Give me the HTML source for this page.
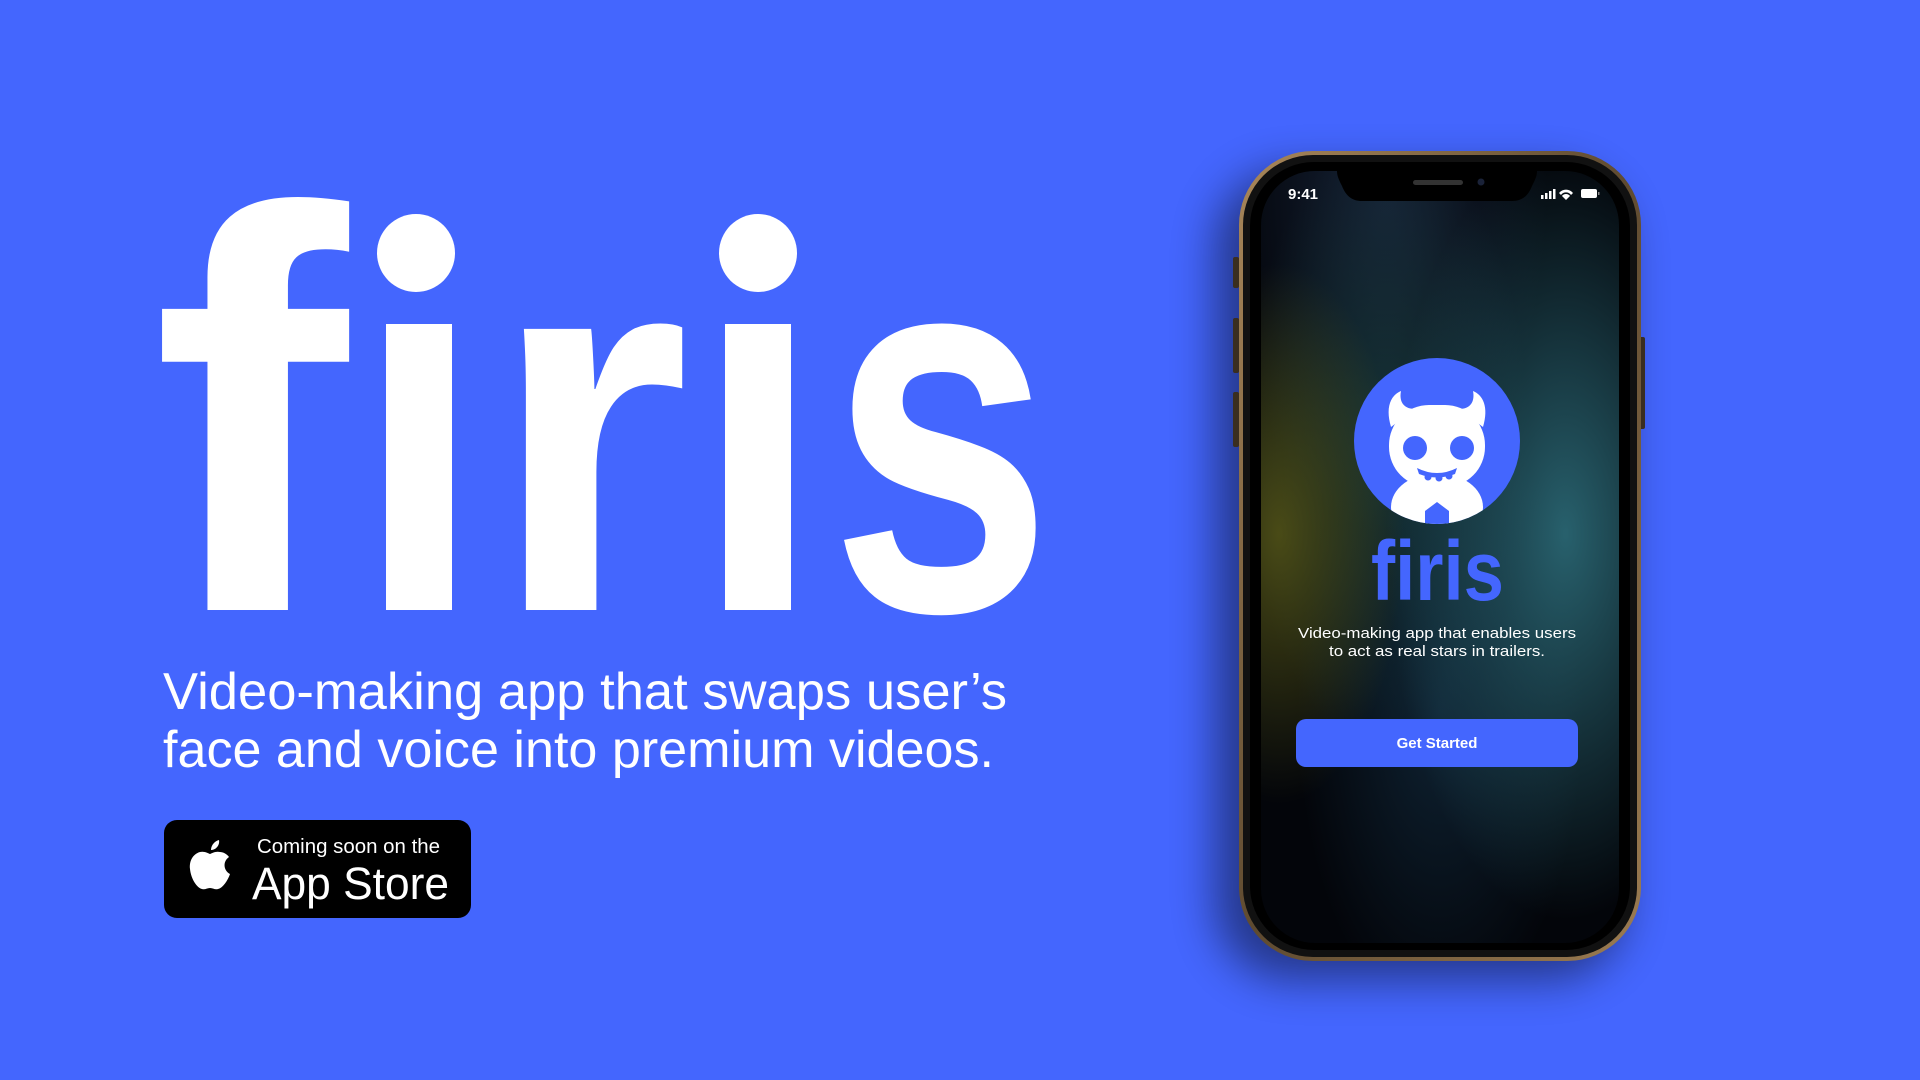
<!DOCTYPE html>
<html><head><meta charset="utf-8"><style>
html,body{margin:0;padding:0;width:1920px;height:1080px;overflow:hidden;background:#4466fe;font-family:"Liberation Sans",sans-serif}
svg{position:absolute;left:0;top:0}
</style></head><body>
<svg width="1920" height="1080" viewBox="0 0 1920 1080">
<defs>
<radialGradient id="g1" cx="0.85" cy="0.47" r="0.5"><stop offset="0" stop-color="#2c6b78" stop-opacity="0.9"/><stop offset="1" stop-color="#2c6b78" stop-opacity="0"/></radialGradient>
<radialGradient id="g2" cx="0.05" cy="0.47" r="0.35"><stop offset="0" stop-color="#5a5a18" stop-opacity="0.8"/><stop offset="1" stop-color="#5a5a18" stop-opacity="0"/></radialGradient>
<radialGradient id="g3" cx="0.35" cy="0.35" r="0.4"><stop offset="0" stop-color="#1d4a48" stop-opacity="0.6"/><stop offset="1" stop-color="#1d4a48" stop-opacity="0"/></radialGradient>
<radialGradient id="g4" cx="0.35" cy="0.02" r="0.45"><stop offset="0" stop-color="#1d2d48" stop-opacity="0.7"/><stop offset="1" stop-color="#1d2d48" stop-opacity="0"/></radialGradient>
<radialGradient id="g5" cx="0.5" cy="0.7" r="0.4"><stop offset="0" stop-color="#1a3f5a" stop-opacity="0.5"/><stop offset="1" stop-color="#1a3f5a" stop-opacity="0"/></radialGradient>
<linearGradient id="gold" x1="0" y1="0" x2="1" y2="1"><stop offset="0" stop-color="#a9875a"/><stop offset="0.5" stop-color="#5e4a30"/><stop offset="1" stop-color="#9c7c52"/></linearGradient>
<filter id="sh" x="-30%" y="-30%" width="160%" height="160%"><feGaussianBlur stdDeviation="22"/></filter>
<clipPath id="cc"><circle cx="0" cy="0" r="83"/></clipPath>
</defs>

<g fill="#fff" font-weight="bold" font-size="532">
<text x="152" y="610" font-size="570" textLength="196" lengthAdjust="spacingAndGlyphs">f</text>
<rect x="386" y="324" width="66" height="286"/>
<circle cx="416" cy="253" r="39"/>
<text x="490" y="610" textLength="200" lengthAdjust="spacingAndGlyphs">r</text>
<rect x="725" y="324" width="66" height="286"/>
<circle cx="758" cy="253" r="39"/>
<text x="830" y="610" textLength="222" lengthAdjust="spacingAndGlyphs">s</text>
</g>

<text x="163" y="709" font-size="52" fill="#fff" textLength="844" lengthAdjust="spacingAndGlyphs">Video-making app that swaps user’s</text>
<text x="163" y="767" font-size="52" fill="#fff" textLength="831" lengthAdjust="spacingAndGlyphs">face and voice into premium videos.</text>

<rect x="164" y="820" width="307" height="98" rx="13" fill="#000"/>
<g transform="translate(186,840)" fill="#fff">
<path d="M34 12 C30 11 26 13 24 14 C22 13 18 11 14 12 C7 14 3 21 4 29 C5 39 11 48 16 49 C19 50 21 48 24 48 C27 48 29 50 32 49 C37 48 42 40 44 34 C38 31 36 22 43 17 C41 14 37 12 34 12 Z"/>
<path d="M25 10 C25 5 29 1 33 0 C34 5 30 10 25 10 Z"/>
</g>
<text x="257" y="853" font-size="20" fill="#fff" textLength="183" lengthAdjust="spacingAndGlyphs">Coming soon on the</text>
<text x="252" y="899" font-size="45" fill="#fff" textLength="197" lengthAdjust="spacingAndGlyphs">App Store</text>

<rect x="1215" y="170" width="410" height="810" rx="75" fill="#000" opacity="0.45" filter="url(#sh)"/>
<rect x="1233" y="257" width="6" height="31" rx="2" fill="#3a2e20"/>
<rect x="1233" y="318" width="6" height="55" rx="2" fill="#3a2e20"/>
<rect x="1233" y="392" width="6" height="55" rx="2" fill="#3a2e20"/>
<rect x="1639" y="337" width="6" height="92" rx="2" fill="#3a2e20"/>
<rect x="1239" y="151" width="402" height="810" rx="74" fill="url(#gold)"/>
<rect x="1243" y="155" width="394" height="802" rx="70" fill="#111"/>
<rect x="1250" y="162" width="380" height="788" rx="64" fill="#000"/>
<g>
<rect x="1261" y="171" width="358" height="772" rx="54" fill="#03050a"/>
<rect x="1261" y="171" width="358" height="772" rx="54" fill="url(#g4)"/>
<rect x="1261" y="171" width="358" height="772" rx="54" fill="url(#g3)"/>
<rect x="1261" y="171" width="358" height="772" rx="54" fill="url(#g5)"/>
<rect x="1261" y="171" width="358" height="772" rx="54" fill="url(#g1)"/>
<rect x="1261" y="171" width="358" height="772" rx="54" fill="url(#g2)"/>
</g>
<path d="M1337 171 H1537 C1537 176 1535 180 1532 186 C1528 196 1522 201 1512 201 H1362 C1352 201 1346 196 1342 186 C1339 180 1337 176 1337 171 Z" fill="#000"/>
<rect x="1413" y="180" width="50" height="5" rx="2.5" fill="#333"/>
<circle cx="1481" cy="182" r="3.5" fill="#1a2238"/>
<text x="1288" y="199" font-size="15" font-weight="bold" fill="#fff">9:41</text>
<g fill="#fff">
<rect x="1541" y="195" width="2.5" height="4"/><rect x="1545" y="193" width="2.5" height="6"/><rect x="1549" y="191" width="2.5" height="8"/><rect x="1553" y="189" width="2.5" height="10"/>
<path d="M1559 193 A9 9 0 0 1 1573 193 L1571 195 A6 6 0 0 0 1561 195 Z"/>
<path d="M1562 196 A5 5 0 0 1 1570 196 L1566 200 Z"/>
<rect x="1581" y="189" width="16" height="9" rx="2"/>
<rect x="1598" y="192" width="1.5" height="3" fill="#888"/>
</g>
<g transform="translate(1437,441)">
<circle r="83" fill="#4466fe"/>
<g clip-path="url(#cc)" fill="#fff">
<ellipse cx="0" cy="66" rx="46" ry="34"/>
<rect x="-48" y="-36" width="96" height="82" rx="40"/>
<path d="M-46 -14 C-52 -34 -46 -46 -36 -50 C-38 -40 -34 -32 -22 -32 Z"/>
<path d="M46 -14 C52 -34 46 -46 36 -50 C38 -40 34 -32 22 -32 Z"/>
<circle cx="-22" cy="7" r="12" fill="#4466fe"/>
<circle cx="25" cy="7" r="12" fill="#4466fe"/>
<path d="M-20 27 Q0 37 20 27 L18 33 Q0 40 -18 33 Z" fill="#4466fe"/>
<circle cx="-9" cy="36" r="3.5" fill="#4466fe"/>
<circle cx="2" cy="37" r="3.5" fill="#4466fe"/>
<circle cx="12" cy="35" r="3.5" fill="#4466fe"/>
<path d="M-12 90 V70 L0 61 L12 70 V90 Z" fill="#4466fe"/>
</g>
</g>
<text x="1371" y="600" font-size="84" font-weight="bold" fill="#4466fe" textLength="133" lengthAdjust="spacingAndGlyphs">firis</text>
<text x="1298" y="638" font-size="15" fill="#fff" textLength="278" lengthAdjust="spacingAndGlyphs">Video-making app that enables users</text>
<text x="1329" y="656" font-size="15" fill="#fff" textLength="216" lengthAdjust="spacingAndGlyphs">to act as real stars in trailers.</text>
<rect x="1296" y="719" width="282" height="48" rx="10" fill="#4466fe"/>
<text x="1437" y="748" font-size="15" font-weight="bold" fill="#fff" text-anchor="middle">Get Started</text>
</svg>
</body></html>
